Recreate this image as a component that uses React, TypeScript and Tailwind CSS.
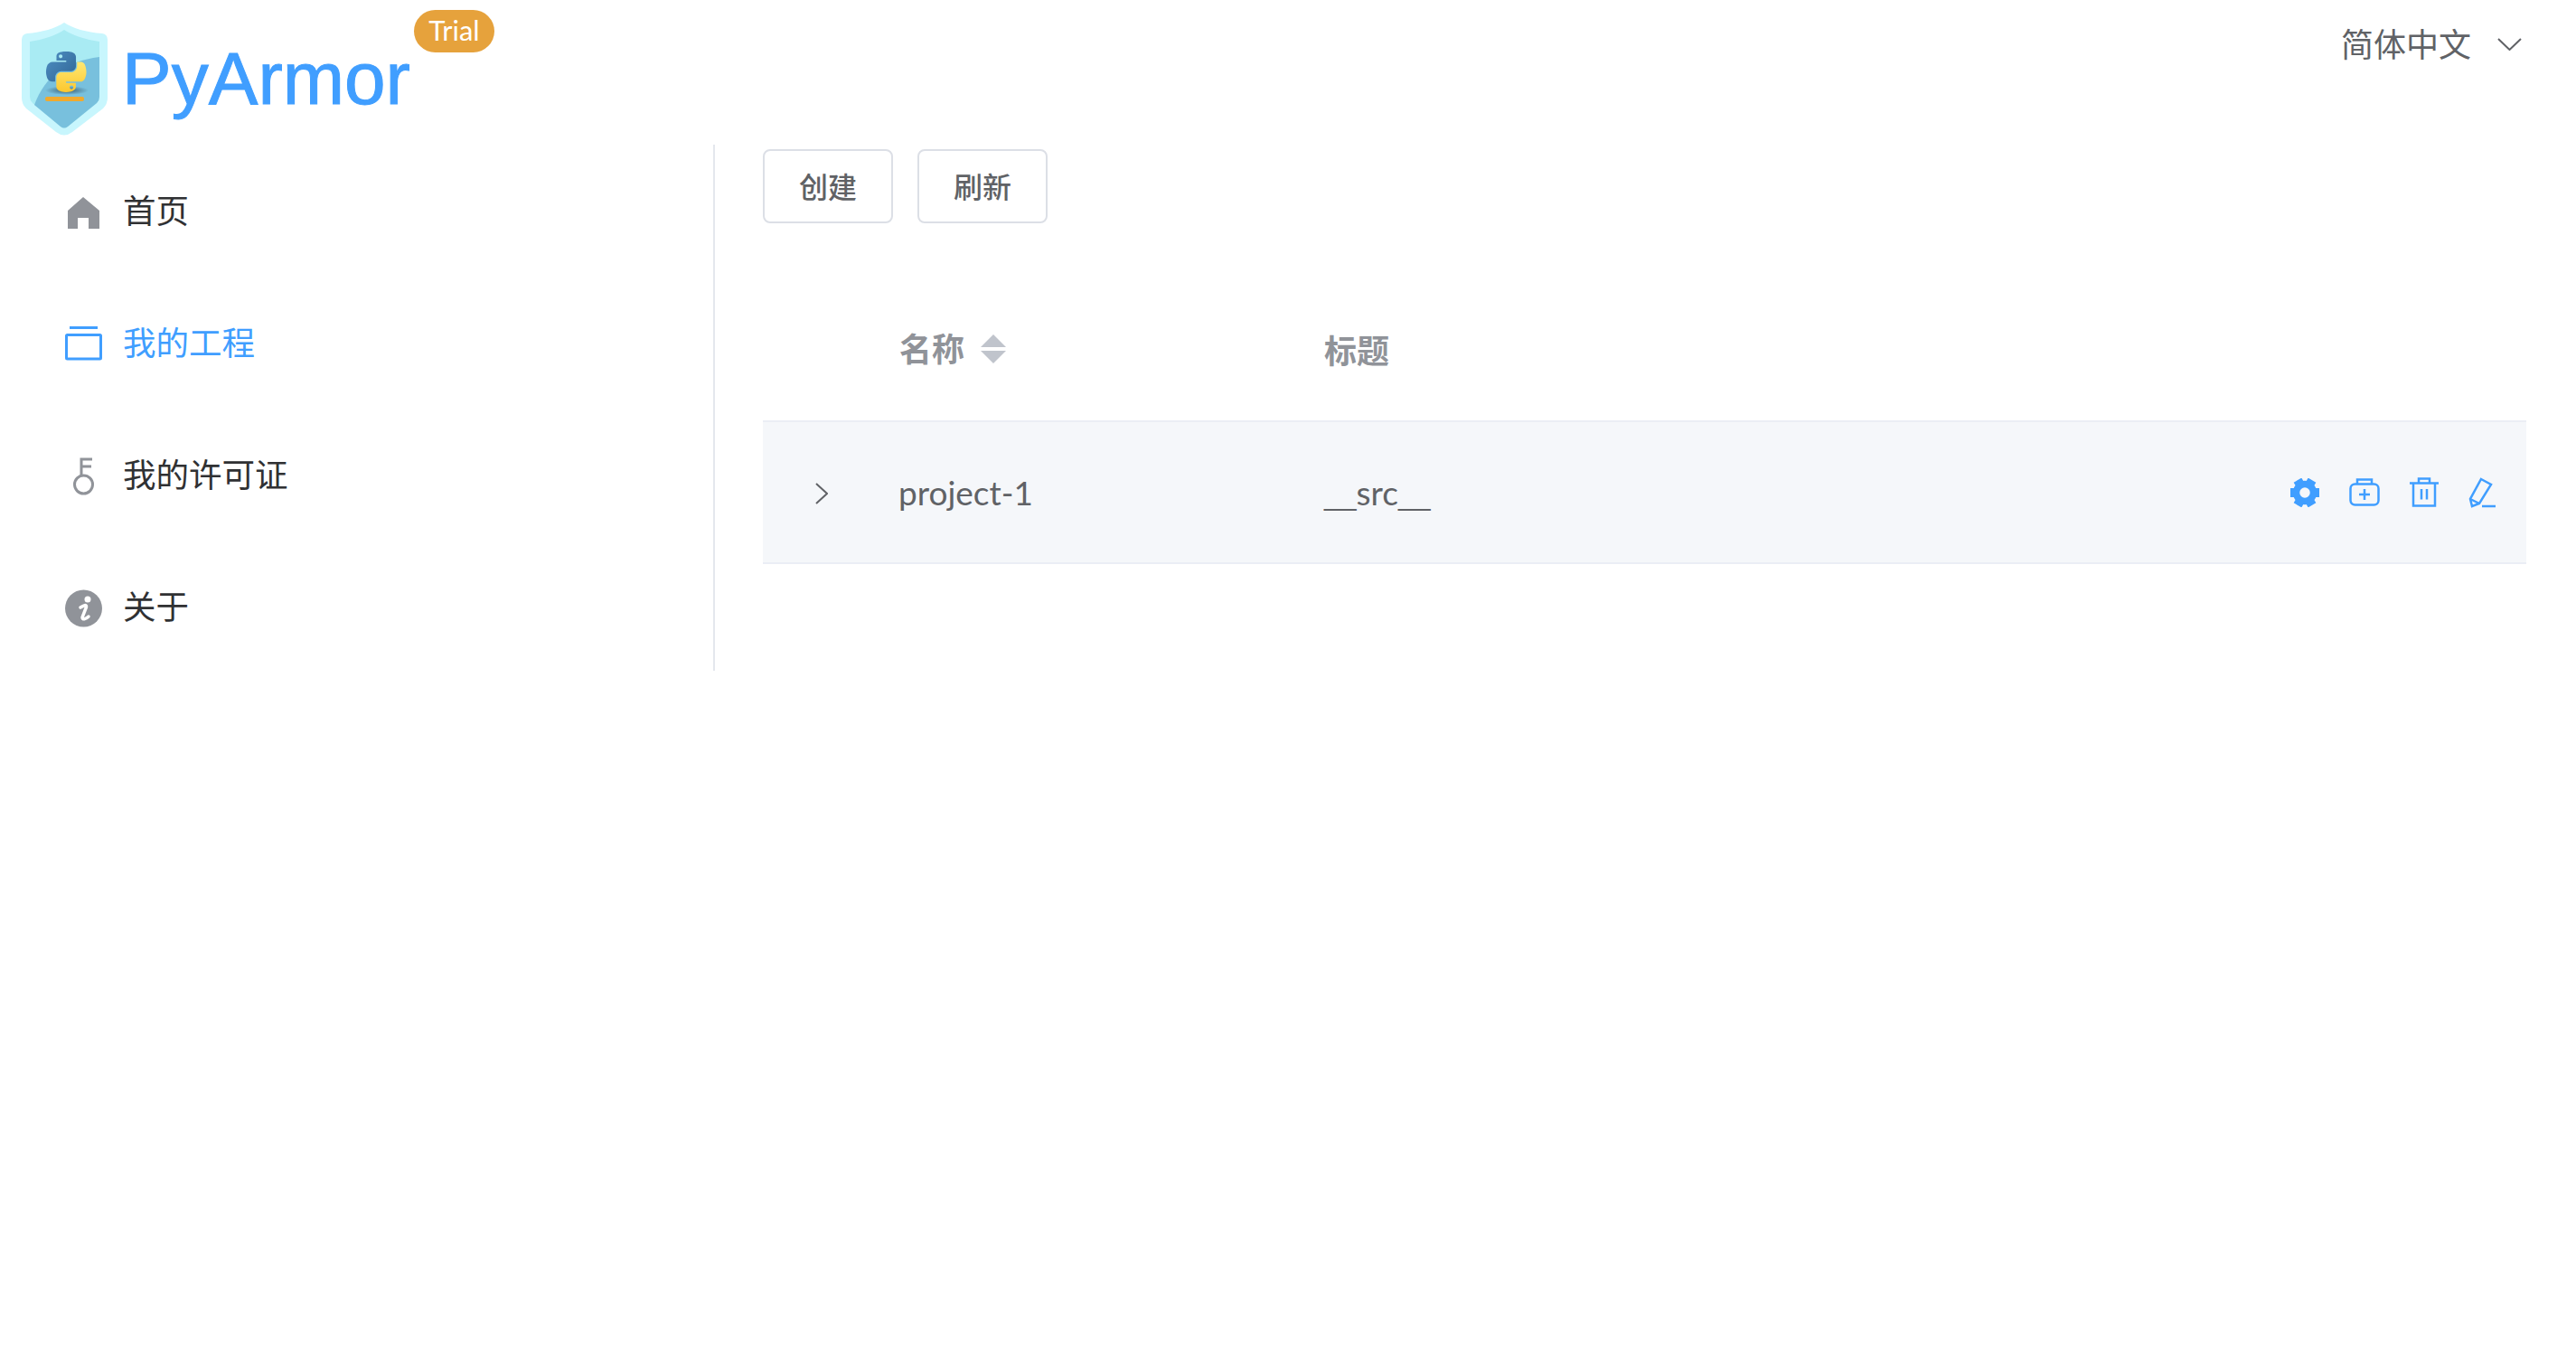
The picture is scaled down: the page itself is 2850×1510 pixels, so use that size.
const font = "font-['Lato','Noto_Sans_CJK_SC',sans-serif]";

const Logo = () => (
  <svg width="96" height="126" viewBox="24 25 96 126" className="shrink-0">
    <defs>
      <radialGradient id="pyShadow">
        <stop offset="0%" stopColor="#234" stopOpacity="0.7" />
        <stop offset="100%" stopColor="#234" stopOpacity="0" />
      </radialGradient>
      <linearGradient id="pyBlue" x1="0" y1="0" x2="1" y2="1">
        <stop offset="0%" stopColor="#4f8fc4" />
        <stop offset="100%" stopColor="#2f6594" />
      </linearGradient>
      <linearGradient id="pyYellow" x1="0" y1="0" x2="0" y2="1">
        <stop offset="0%" stopColor="#ffe873" />
        <stop offset="100%" stopColor="#fcc72e" />
      </linearGradient>
    </defs>
    <path d="M71 25 C80 31 96 36 113 37 Q119 38 119 44 V108 Q119 115 114 120 L80 146 Q71 153 62 146 L29 120 Q24 115 24 108 V44 Q24 38 30 37 C46 36 62 31 71 25Z" fill="#c8f6fd" />
    <path d="M71 33 C80 39 95 44 110 46 V107 Q110 111 107 114 L75 140 Q71 143 67 140 L36 114 Q33 111 33 107 V46 C48 44 62 39 71 33Z" fill="#a9ebf3" />
    <path d="M110 63 C72 68 50 84 38 116 L67 140 Q71 143 75 140 L107 114 Q110 111 110 107Z" fill="#78c0dd" />
    <ellipse cx="74" cy="100" rx="24" ry="5" fill="url(#pyShadow)" />
    <g transform="translate(51 57) scale(0.4)">
      <path
        d="M54.9 0C50.3 0 46 .4 42.1 1.1 30.7 3.1 28.7 7.3 28.7 15v10.2h27v3.4H18.6c-7.8 0-14.7 4.7-16.8 13.7-2.5 10.2-2.6 16.6 0 27.3 1.9 7.9 6.5 13.6 14.3 13.6h9.2V71c0-8.9 7.7-16.7 16.8-16.7h27c7.5 0 13.5-6.2 13.5-13.7V15c0-7.3-6.1-12.7-13.5-13.9C63.8.3 59 0 54.9 0zM40.3 8.2c2.8 0 5.1 2.3 5.1 5.1 0 2.8-2.3 5.1-5.1 5.1-2.8 0-5.1-2.3-5.1-5.1 0-2.8 2.3-5.1 5.1-5.1z"
        fill="url(#pyBlue)"
      />
      <path
        d="M85.6 28.7v11.9c0 9.2-7.8 17-16.8 17h-27c-7.4 0-13.5 6.3-13.5 13.7v25.7c0 7.3 6.4 11.6 13.5 13.7 8.5 2.5 16.7 2.9 27 0 6.8-2 13.5-5.9 13.5-13.7V86.7h-27v-3.4h40.5c7.8 0 10.8-5.5 13.5-13.7 2.8-8.5 2.7-16.6 0-27.3-1.9-7.8-5.6-13.7-13.5-13.7H85.6zM70.4 93.7c2.8 0 5.1 2.3 5.1 5.1 0 2.8-2.3 5.1-5.1 5.1-2.8 0-5.1-2.3-5.1-5.1 0-2.8 2.3-5.1 5.1-5.1z"
        fill="url(#pyYellow)"
      />
    </g>
    <rect x="50" y="107" width="43" height="5" rx="2" fill="#f0a92e" />
  </svg>
);

const HomeIcon = () => (
  <svg width="40" height="40" viewBox="0 0 40 40" className="overflow-visible">
    <path d="M3 40V20L20 5L38 20V40H26V28H14V40Z" fill="#909399" />
  </svg>
);

const ProjectIcon = () => (
  <svg width="40" height="40" viewBox="0 0 40 40" className="overflow-visible" fill="none" stroke="#409eff" strokeWidth="3">
    <path d="M5 3.5H36" />
    <rect x="1.5" y="11.5" width="38" height="26.5" rx="1" />
  </svg>
);

const KeyIcon = () => (
  <svg width="40" height="40" viewBox="0 0 40 40" className="overflow-visible" fill="none" stroke="#909399" strokeWidth="3">
    <circle cx="20.5" cy="31" r="10" />
    <path d="M18 21V3H30M18 11H29" />
  </svg>
);

const InfoIcon = () => (
  <svg width="40" height="40" viewBox="0 0 40 40" className="overflow-visible">
    <circle cx="20.5" cy="22" r="20.5" fill="#909399" />
    <circle cx="25" cy="12" r="3.5" fill="#fff" />
    <path d="M17 21C20 19 24 17 23.5 20.5L19 32C19 35 23 34 26 31" fill="none" stroke="#fff" strokeWidth="3.5" strokeLinecap="round" />
  </svg>
);

const GearIcon = () => (
  <svg width="34" height="32" viewBox="0 0 34 32">
    <circle cx="17" cy="16" r="9.5" fill="none" stroke="#409eff" strokeWidth="7.5" />
    {[0, 60, 120, 180, 240, 300].map((r) => (
      <rect key={r} x="12" y="0" width="10" height="7" fill="#409eff" transform={`rotate(${r + 30} 17 16)`} />
    ))}
  </svg>
);

const CaseIcon = () => (
  <svg width="34" height="32" viewBox="0 0 34 32" fill="none" stroke="#409eff" strokeWidth="2.5">
    <rect x="1.5" y="6.5" width="31" height="23" rx="5" />
    <path d="M9 6V1.5H25V6M17 12V24M11 18H23" />
  </svg>
);

const TrashIcon = () => (
  <svg width="34" height="34" viewBox="0 0 34 34" fill="none" stroke="#409eff" strokeWidth="2.5">
    <path d="M1 6.5H33M11 6V1.5H23V6M5 6.5V31.5H29V6.5M14 13V24.5M20 13V24.5" />
  </svg>
);

const EditIcon = () => (
  <svg width="34" height="34" viewBox="0 0 34 34" fill="none" stroke="#409eff" strokeWidth="2.5">
    <path d="M14 2L25 8L12 29L4 32L2 24ZM2 24L12 29M15 32H30" />
  </svg>
);

const navItems = [
  { label: "首页", icon: <HomeIcon />, active: false },
  { label: "我的工程", icon: <ProjectIcon />, active: true },
  { label: "我的许可证", icon: <KeyIcon />, active: false },
  { label: "关于", icon: <InfoIcon />, active: false },
];

export default function App() {
  return (
    <div className={`w-[2850px] h-[1510px] bg-white overflow-hidden ${font}`}>
      {/* Header */}
      <header className="h-[160px] flex justify-between">
        <div className="relative flex items-start pl-[24px] pt-[25px]">
          <Logo />
          <span className="ml-[15px] mt-[7px] text-[82px] leading-[110px] [-webkit-text-stroke:1px_#409eff] text-[#409eff] font-['Liberation_Sans',sans-serif]">
            PyArmor
          </span>
          <span className="absolute left-[458px] top-[11px] w-[89px] h-[47px] pb-[3px] rounded-full bg-[#e6a23c] flex items-center justify-center text-[31px] font-normal text-white">
            Trial
          </span>
        </div>
        <div className="flex items-start pt-[27px] pr-[60px] gap-[29px] text-[36px] leading-[44px] text-[#606266]">
          <span>简体中文</span>
          <svg width="27" height="14" viewBox="0 0 27 14" fill="none" stroke="#606266" strokeWidth="2" className="mt-[15px]">
            <path d="M1 1L13.5 13L26 1" />
          </svg>
        </div>
      </header>

      <div className="flex">
        {/* Sidebar */}
        <nav className="w-[791px] h-[582px] border-r-2 border-[#e4e7ed] shrink-0">
          {navItems.map((item) => (
            <div
              key={item.label}
              className={`h-[146px] pl-[72px] flex items-center gap-[24px] text-[36.5px] ${item.active ? "text-[#409eff]" : "text-[#303133]"}`}
            >
              {item.icon}
              <span className="pt-px">{item.label}</span>
            </div>
          ))}
        </nav>

        {/* Main */}
        <main className="flex-1 pl-[53px] pr-[55px] pt-[5px]">
          <div className="flex gap-[27px]">
            <button className="w-[144px] h-[82px] pt-[2px] rounded-lg border-2 border-[#dcdfe6] bg-white text-[32px] font-medium text-[#606266]">
              创建
            </button>
            <button className="w-[144px] h-[82px] pt-[2px] rounded-lg border-2 border-[#dcdfe6] bg-white text-[32px] font-medium text-[#606266]">
              刷新
            </button>
          </div>

          <div className="mt-[98px]">
            <div className="h-[120px] pb-[35px] flex items-center text-[36px] font-bold text-[#909399]">
              <div className="w-[150px]" />
              <div className="w-[471px] flex items-center gap-[18px] -mt-[3px] pl-px">
                <span>名称</span>
                <svg width="28" height="32" viewBox="0 0 28 32">
                  <path d="M14 0L28 14H0Z" fill="#c0c4cc" />
                  <path d="M14 32L0 18H28Z" fill="#c0c4cc" />
                </svg>
              </div>
              <div>标题</div>
            </div>
            <div className="h-[159px] flex items-center bg-[#f5f7fa] border-y-2 border-[#ebeef5] text-[37px] text-[#606266]">
              <div className="w-[150px] pl-[58px]">
                <svg width="14" height="24" viewBox="0 0 14 24" fill="none" stroke="#606266" strokeWidth="2" className="mt-[2px]">
                  <path d="M1 1L13 12L1 23" />
                </svg>
              </div>
              <div className="w-[471px]">project-1</div>
              <div className="flex-1">
                <span className="font-['Liberation_Sans',sans-serif] text-[32px]">__</span>
                src
                <span className="font-['Liberation_Sans',sans-serif] text-[32px]">__</span>
              </div>
              <div className="flex items-center gap-[32px] pr-[30px]">
                <GearIcon />
                <CaseIcon />
                <TrashIcon />
                <EditIcon />
              </div>
            </div>
          </div>
        </main>
      </div>
    </div>
  );
}
